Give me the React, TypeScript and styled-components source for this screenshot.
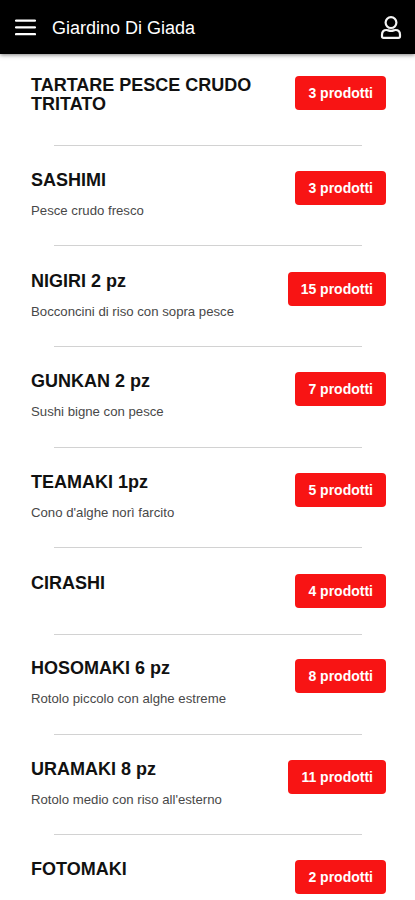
import React from 'react';
import styled, { createGlobalStyle } from 'styled-components';

const GlobalStyle = createGlobalStyle`
  * { box-sizing: border-box; }
  body { margin: 0; background: #fff; font-family: "Liberation Sans", Arial, sans-serif; color: #111; }
`;

const Page = styled.div`
  width: 415px;
  height: 900px;
  overflow: hidden;
  background: #fff;
`;

const Header = styled.header`
  display: flex;
  align-items: center;
  height: 54px;
  padding: 0 13px 0 15px;
  background: #000;
  color: #fff;
  box-shadow: 0 1px 4px rgba(0, 0, 0, 0.5);
`;

const Brand = styled.div`
  flex: 1;
  margin-left: 16px;
  padding-top: 2px;
  font-size: 18px;
  line-height: 22px;
  white-space: nowrap;
`;

const MenuIcon = styled.svg`
  width: 21px;
  height: 18px;
  display: block;
`;

const UserIcon = styled.svg`
  width: 22px;
  height: 24px;
  display: block;
`;

const List = styled.main`
  padding-top: 22px;
`;

const Row = styled.section<{ $gap: number; $height: number }>`
  display: flex;
  justify-content: space-between;
  align-items: flex-start;
  height: ${(p) => p.$height}px;
  margin-top: ${(p) => p.$gap}px;
  padding: 0 29px 0 31px;
`;

const Divider = styled.div`
  height: 1px;
  margin: 0 53px 0 54px;
  background: #d2d2d2;
`;

const Title = styled.h2`
  margin: 0;
  font-size: 18px;
  line-height: 19px;
  font-weight: 700;
  white-space: nowrap;
`;

const TitleLine = styled.span`
  display: block;
`;

const Note = styled.p`
  margin: 12px 0 0;
  font-size: 13.2px;
  line-height: 17px;
  color: #484848;
  white-space: nowrap;
`;

const Count = styled.button`
  height: 34px;
  padding: 0 13px;
  border: 0;
  border-radius: 4px;
  background: #f81414;
  color: #fff;
  font: 700 14px/34px "Liberation Sans", Arial, sans-serif;
  white-space: nowrap;
`;

interface Category {
  title: string[];
  note?: string;
  count: number;
  gap: number;
  height: number;
}

const categories: Category[] = [
  { title: ['TARTARE PESCE CRUDO', 'TRITATO'], count: 3, gap: 0, height: 69 },
  { title: ['SASHIMI'], note: 'Pesce crudo fresco', count: 3, gap: 25, height: 74 },
  { title: ['NIGIRI 2 pz'], note: 'Bocconcini di riso con sopra pesce', count: 15, gap: 26, height: 74 },
  { title: ['GUNKAN 2 pz'], note: 'Sushi bigne con pesce', count: 7, gap: 25, height: 75 },
  { title: ['TEAMAKI 1pz'], note: "Cono d'alghe norì farcito", count: 5, gap: 25, height: 74 },
  { title: ['CIRASHI'], count: 4, gap: 26, height: 60 },
  { title: ['HOSOMAKI 6 pz'], note: 'Rotolo piccolo con alghe estreme', count: 8, gap: 24, height: 75 },
  { title: ['URAMAKI 8 pz'], note: "Rotolo medio con riso all'esterno", count: 11, gap: 25, height: 74 },
  { title: ['FOTOMAKI'], count: 2, gap: 25, height: 61 },
];

export default function App() {
  return (
    <Page>
      <GlobalStyle />
      <Header>
        <MenuIcon viewBox="0 0 21 18" aria-label="Menu">
          <path d="M1 2.6h19M1 9.4h19M1 16.2h19" stroke="#fff" strokeWidth="2.3" strokeLinecap="round" />
        </MenuIcon>
        <Brand>Giardino Di Giada</Brand>
        <UserIcon viewBox="0 0 22 24" aria-label="Account">
          <circle cx="11" cy="7.6" r="5.4" fill="none" stroke="#f4f4f4" strokeWidth="2.2" />
          <path d="M6.4 15C3.6 15 2 17 2 19.8v1.4q0 1.6 1.6 1.6h14.8q1.6 0 1.6-1.6v-1.4C20 17 18.4 15 15.6 15c-1.4 0-2.4.9-4.6.9S7.800 15 6.400 15z" fill="none" stroke="#f4f4f4" strokeWidth="2.2" strokeLinejoin="round" />
        </UserIcon>
      </Header>
      <List>
        {categories.map((c, i) => (
          <React.Fragment key={c.title[0]}>
            {i > 0 && <Divider />}
            <Row $gap={c.gap} $height={c.height}>
              <div>
                <Title>
                  {c.title.map((line) => <TitleLine key={line}>{line}</TitleLine>)}
                </Title>
                {c.note && <Note>{c.note}</Note>}
              </div>
              <Count>{c.count} prodotti</Count>
            </Row>
          </React.Fragment>
        ))}
      </List>
    </Page>
  );
}
